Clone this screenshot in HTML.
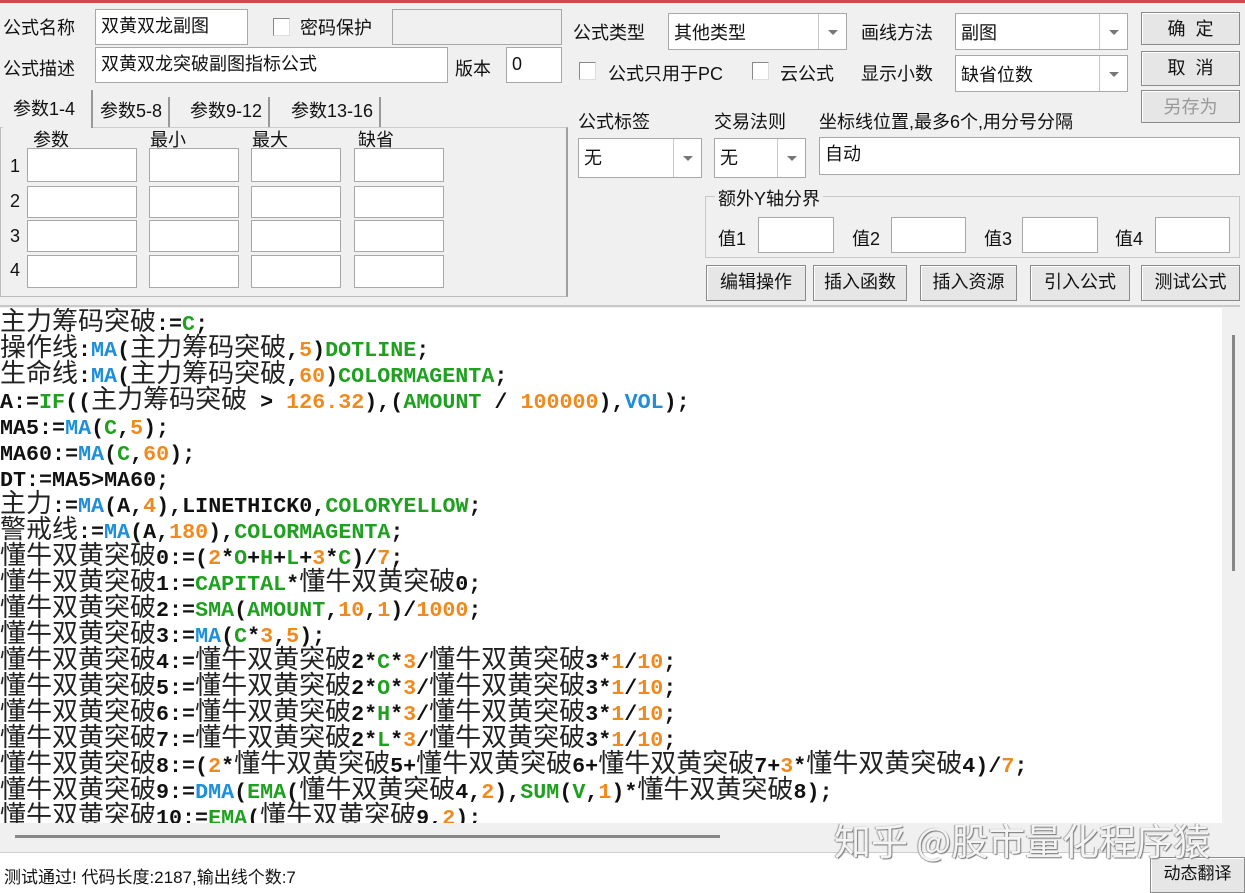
<!DOCTYPE html>
<html><head><meta charset="utf-8">
<style>
*{box-sizing:border-box;margin:0;padding:0}
body{width:1245px;height:893px;overflow:hidden;background:#f0f0f0;position:relative;font-family:"Liberation Sans","Noto Sans CJK SC",sans-serif;font-size:18px;color:#111}
.a{position:absolute;white-space:nowrap}
.in{position:absolute;background:#fff;border:1px solid #a8a8a8;padding:3px 5px;font-size:18px;line-height:26px}
.cb{position:absolute;width:17px;height:18px;background:#fff;border:1px solid #888;border-right-color:#ddd;border-bottom-color:#ddd}
.combo{position:absolute;background:#fff;border:1px solid #a8a8a8;font-size:18px;padding:5px 5px}
.combo .dd{position:absolute;right:0;top:0;bottom:0;width:28px;border-left:1px solid #c8c8c8}
.combo .dd:after{content:"";position:absolute;left:9px;top:50%;margin-top:-2px;border-left:5px solid transparent;border-right:5px solid transparent;border-top:5px solid #777}
.btn{position:absolute;background:#e6e6e6;border:1px solid #8a8a8a;box-shadow:inset 1px 1px 0 #fff;text-align:center;font-size:18px;line-height:32px}
.code{position:absolute;left:0;top:308px;width:1222px;height:515px;background:#fff;overflow:hidden;padding-top:4px}
.code div{height:26px;line-height:26px;font-family:"Liberation Mono",monospace;font-weight:bold;font-size:21.7px;color:#111;white-space:pre;overflow:visible}
.code .c{font-family:"Noto Sans CJK SC",sans-serif;font-weight:normal;font-size:26px;line-height:0;color:#222}
.b{color:#1e8fd8}.g{color:#20a020}.o{color:#f08a1e}
</style></head><body>
<div class="a" style="left:0;top:0;width:1245px;height:3px;background:#d04848"></div>

<div class="a" style="left:3px;top:14px">公式名称</div>
<div class="in" style="left:95px;top:9px;width:153px;height:36px">双黄双龙副图</div>
<div class="cb" style="left:273px;top:18px"></div>
<div class="a" style="left:300px;top:14px">密码保护</div>
<div class="in" style="left:392px;top:9px;width:170px;height:36px;background:#f0f0f0"></div>

<div class="a" style="left:3px;top:55px">公式描述</div>
<div class="in" style="left:95px;top:47px;width:353px;height:36px">双黄双龙突破副图指标公式</div>
<div class="a" style="left:455px;top:55px">版本</div>
<div class="in" style="left:506px;top:47px;width:56px;height:36px">0</div>

<div class="a" style="left:0;top:127px;width:568px;height:170px;border:1px solid #bbb;border-top-color:#ccc;border-right:2px solid #a0a0a0"></div>
<div class="a" style="left:3px;top:90px;width:90px;height:38px;background:#f0f0f0;border-right:2px solid #999;padding:5px 0 0 10px">参数1-4</div>
<div class="a" style="left:100px;top:97px;height:30px;border-right:2px solid #999;padding-right:6px">参数5-8</div>
<div class="a" style="left:190px;top:97px;height:30px;border-right:2px solid #999;padding-right:6px">参数9-12</div>
<div class="a" style="left:291px;top:97px;height:30px;border-right:2px solid #999;padding-right:6px">参数13-16</div>
<div class="a" style="left:33px;top:126px">参数</div>
<div class="a" style="left:150px;top:126px">最小</div>
<div class="a" style="left:252px;top:126px">最大</div>
<div class="a" style="left:358px;top:126px">缺省</div>
<div class="a" style="left:10px;top:156px">1</div>
<div class="a" style="left:10px;top:191px">2</div>
<div class="a" style="left:10px;top:226px">3</div>
<div class="a" style="left:10px;top:260px">4</div>
<div class="in" style="left:27px;top:148px;width:110px;height:34px"></div><div class="in" style="left:149px;top:148px;width:90px;height:34px"></div><div class="in" style="left:251px;top:148px;width:90px;height:34px"></div><div class="in" style="left:354px;top:148px;width:90px;height:34px"></div>
<div class="in" style="left:27px;top:186px;width:110px;height:32px"></div><div class="in" style="left:149px;top:186px;width:90px;height:32px"></div><div class="in" style="left:251px;top:186px;width:90px;height:32px"></div><div class="in" style="left:354px;top:186px;width:90px;height:32px"></div>
<div class="in" style="left:27px;top:220px;width:110px;height:32px"></div><div class="in" style="left:149px;top:220px;width:90px;height:32px"></div><div class="in" style="left:251px;top:220px;width:90px;height:32px"></div><div class="in" style="left:354px;top:220px;width:90px;height:32px"></div>
<div class="in" style="left:27px;top:255px;width:110px;height:33px"></div><div class="in" style="left:149px;top:255px;width:90px;height:33px"></div><div class="in" style="left:251px;top:255px;width:90px;height:33px"></div><div class="in" style="left:354px;top:255px;width:90px;height:33px"></div>

<div class="a" style="left:573px;top:19px">公式类型</div>
<div class="combo" style="left:668px;top:13px;width:179px;height:37px">其他类型<div class="dd"></div></div>
<div class="a" style="left:861px;top:19px">画线方法</div>
<div class="combo" style="left:955px;top:13px;width:173px;height:37px">副图<div class="dd"></div></div>
<div class="btn" style="left:1141px;top:12px;width:99px;height:33px">确&nbsp;&nbsp;定</div>
<div class="btn" style="left:1141px;top:51px;width:99px;height:35px">取&nbsp;&nbsp;消</div>
<div class="btn" style="left:1141px;top:90px;width:99px;height:33px;color:#999">另存为</div>

<div class="cb" style="left:579px;top:62px"></div>
<div class="a" style="left:608px;top:60px">公式只用于PC</div>
<div class="cb" style="left:752px;top:62px"></div>
<div class="a" style="left:780px;top:60px">云公式</div>
<div class="a" style="left:861px;top:60px">显示小数</div>
<div class="combo" style="left:955px;top:55px;width:173px;height:37px">缺省位数<div class="dd"></div></div>

<div class="a" style="left:578px;top:108px">公式标签</div>
<div class="a" style="left:714px;top:108px">交易法则</div>
<div class="a" style="left:819px;top:108px">坐标线位置,最多6个,用分号分隔</div>
<div class="combo" style="left:578px;top:138px;width:124px;height:40px">无<div class="dd"></div></div>
<div class="combo" style="left:714px;top:138px;width:92px;height:40px">无<div class="dd"></div></div>
<div class="in" style="left:819px;top:137px;width:421px;height:38px">自动</div>

<div class="a" style="left:705px;top:196px;width:535px;height:62px;border:1px solid #c8c8c8"></div>
<div class="a" style="left:715px;top:185px;background:#f0f0f0;padding:0 3px">额外Y轴分界</div>
<div class="a" style="left:718px;top:225px">值1</div><div class="in" style="left:758px;top:217px;width:76px;height:36px"></div>
<div class="a" style="left:852px;top:225px">值2</div><div class="in" style="left:891px;top:217px;width:75px;height:36px"></div>
<div class="a" style="left:984px;top:225px">值3</div><div class="in" style="left:1022px;top:217px;width:76px;height:36px"></div>
<div class="a" style="left:1115px;top:225px">值4</div><div class="in" style="left:1155px;top:217px;width:75px;height:36px"></div>

<div class="btn" style="left:706px;top:265px;width:100px;height:36px">编辑操作</div>
<div class="btn" style="left:813px;top:265px;width:94px;height:36px">插入函数</div>
<div class="btn" style="left:920px;top:265px;width:97px;height:36px">插入资源</div>
<div class="btn" style="left:1030px;top:265px;width:100px;height:36px">引入公式</div>
<div class="btn" style="left:1141px;top:265px;width:99px;height:36px">测试公式</div>
<div class="a" style="left:0;top:305px;width:1240px;height:2px;background:#c8c8c8"></div>

<div class="code">
<div><span class="c">主力筹码突破</span>:=<span class="g">C</span>;</div>
<div><span class="c">操作线</span>:<span class="b">MA</span>(<span class="c">主力筹码突破</span>,<span class="o">5</span>)<span class="g">DOTLINE</span>;</div>
<div><span class="c">生命线</span>:<span class="b">MA</span>(<span class="c">主力筹码突破</span>,<span class="o">60</span>)<span class="g">COLORMAGENTA</span>;</div>
<div>A:=<span class="g">IF</span>((<span class="c">主力筹码突破</span> &gt; <span class="o">126.32</span>),(<span class="g">AMOUNT</span> / <span class="o">100000</span>),<span class="b">VOL</span>);</div>
<div>MA5:=<span class="b">MA</span>(<span class="g">C</span>,<span class="o">5</span>);</div>
<div>MA60:=<span class="b">MA</span>(<span class="g">C</span>,<span class="o">60</span>);</div>
<div>DT:=MA5&gt;MA60;</div>
<div><span class="c">主力</span>:=<span class="b">MA</span>(A,<span class="o">4</span>),LINETHICK0,<span class="g">COLORYELLOW</span>;</div>
<div><span class="c">警戒线</span>:=<span class="b">MA</span>(A,<span class="o">180</span>),<span class="g">COLORMAGENTA</span>;</div>
<div><span class="c">懂牛双黄突破</span>0:=(<span class="o">2</span>*<span class="g">O</span>+<span class="g">H</span>+<span class="g">L</span>+<span class="o">3</span>*<span class="g">C</span>)/<span class="o">7</span>;</div>
<div><span class="c">懂牛双黄突破</span>1:=<span class="g">CAPITAL</span>*<span class="c">懂牛双黄突破</span>0;</div>
<div><span class="c">懂牛双黄突破</span>2:=<span class="g">SMA</span>(<span class="g">AMOUNT</span>,<span class="o">10</span>,<span class="o">1</span>)/<span class="o">1000</span>;</div>
<div><span class="c">懂牛双黄突破</span>3:=<span class="b">MA</span>(<span class="g">C</span>*<span class="o">3</span>,<span class="o">5</span>);</div>
<div><span class="c">懂牛双黄突破</span>4:=<span class="c">懂牛双黄突破</span>2*<span class="g">C</span>*<span class="o">3</span>/<span class="c">懂牛双黄突破</span>3*<span class="o">1</span>/<span class="o">10</span>;</div>
<div><span class="c">懂牛双黄突破</span>5:=<span class="c">懂牛双黄突破</span>2*<span class="g">O</span>*<span class="o">3</span>/<span class="c">懂牛双黄突破</span>3*<span class="o">1</span>/<span class="o">10</span>;</div>
<div><span class="c">懂牛双黄突破</span>6:=<span class="c">懂牛双黄突破</span>2*<span class="g">H</span>*<span class="o">3</span>/<span class="c">懂牛双黄突破</span>3*<span class="o">1</span>/<span class="o">10</span>;</div>
<div><span class="c">懂牛双黄突破</span>7:=<span class="c">懂牛双黄突破</span>2*<span class="g">L</span>*<span class="o">3</span>/<span class="c">懂牛双黄突破</span>3*<span class="o">1</span>/<span class="o">10</span>;</div>
<div><span class="c">懂牛双黄突破</span>8:=(<span class="o">2</span>*<span class="c">懂牛双黄突破</span>5+<span class="c">懂牛双黄突破</span>6+<span class="c">懂牛双黄突破</span>7+<span class="o">3</span>*<span class="c">懂牛双黄突破</span>4)/<span class="o">7</span>;</div>
<div><span class="c">懂牛双黄突破</span>9:=<span class="b">DMA</span>(<span class="g">EMA</span>(<span class="c">懂牛双黄突破</span>4,<span class="o">2</span>),<span class="g">SUM</span>(<span class="g">V</span>,<span class="o">1</span>)*<span class="c">懂牛双黄突破</span>8);</div>
<div><span class="c">懂牛双黄突破</span>10:=<span class="g">EMA</span>(<span class="c">懂牛双黄突破</span>9,<span class="o">2</span>);</div>
</div>
<div class="a" style="left:1232px;top:335px;width:3px;height:236px;background:#888"></div>
<div class="a" style="left:15px;top:835px;width:705px;height:3px;background:#888"></div>
<div class="a" style="left:0;top:852px;width:1150px;height:41px;background:#fff;border-top:1px solid #ccc"></div>
<div class="a" style="left:4px;top:863px;font-size:17px">测试通过! 代码长度:2187,输出线个数:7</div>
<div class="btn" style="left:1150px;top:857px;width:95px;height:36px;font-size:17px">动态翻译</div>
<div class="a" style="left:834px;top:815px;font-size:37px;line-height:48px;color:#f4f4f4;text-shadow:1px 1px 1px #777,-1px 0 1px #999;font-family:'Noto Sans CJK SC',sans-serif">知乎 @股市量化程序猿</div>
</body></html>
